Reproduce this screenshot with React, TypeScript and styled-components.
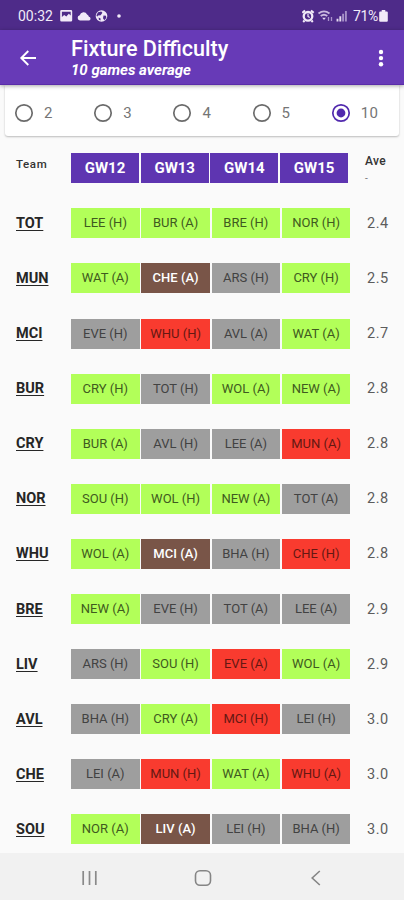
import React from "react";
import styled, { createGlobalStyle } from "styled-components";

const Global = createGlobalStyle`
  * { box-sizing: border-box; }
  html, body { margin: 0; padding: 0; background: #fafafa; }
  body { font-family: Roboto, "Liberation Sans", sans-serif; overflow: hidden; }
`;

const Screen = styled.div`
  width: 404px;
  height: 900px;
  display: flex;
  flex-direction: column;
  background: #fafafa;
  overflow: hidden;
`;

const StatusBar = styled.div`
  height: 30px;
  flex: none;
  display: flex;
  align-items: center;
  justify-content: space-between;
  padding: 2px 16px 0 18px;
  background: #4e2b89;
  color: #f1eaf8;
  font-size: 14px;
`;

const StatusGroup = styled.div`
  display: flex;
  align-items: center;
  svg { display: block; flex: none; }
`;

const Clock = styled.span`
  width: 42px;
`;

const Percent = styled.span`
  margin: 0 1px 0 3px;
  letter-spacing: -0.3px;
`;

const AppBar = styled.header`
  height: 55px;
  flex: none;
  display: flex;
  align-items: flex-start;
  padding: 0 15px 0 16px;
  background: #673ab7;
  border-bottom: 1px solid #5a2ca9;
  box-shadow: 0 1px 4px rgba(0, 0, 0, 0.35);
  color: #fff;
  position: relative;
`;

const IconButton = styled.button<{ $width: number }>`
  width: ${(p) => p.$width}px;
  height: 55px;
  padding: 0;
  border: 0;
  background: none;
  color: inherit;
  display: flex;
  align-items: center;
  svg { display: block; }
`;

const Titles = styled.div`
  flex: 1;
  padding: 6px 0 0 15px;
`;

const Title = styled.h1`
  margin: 0;
  font-size: 21.6px;
  line-height: 25px;
  font-weight: 500;
  white-space: nowrap;
`;

const Subtitle = styled.div`
  font-size: 15px;
  line-height: 19px;
  font-weight: 700;
  font-style: italic;
  white-space: nowrap;
`;

const RangeCard = styled.div`
  height: 51px;
  flex: none;
  margin: 0 5px;
  padding-left: 9px;
  display: flex;
  background: #fff;
  border-radius: 0 0 3px 3px;
  box-shadow: 0 1px 2px rgba(0, 0, 0, 0.25);
`;

const Range = styled.label`
  flex: 0 0 79.2px;
  display: flex;
  align-items: center;
  gap: 10px;
  padding-top: 5px;
  font-size: 15px;
  letter-spacing: 0.2px;
  color: #757575;
  &:last-child { flex-basis: auto; }
  svg { display: block; flex: none; }
`;

const Columns = styled.div`
  display: grid;
  grid-template-columns: 71px 280px 1fr;
  align-items: center;
`;

const HeadRow = styled(Columns)`
  height: 30px;
  flex: none;
  margin-top: 17px;
  align-items: start;
`;

const HeadTeam = styled.div`
  padding: 4px 0 0 16px;
  font-size: 11.5px;
  letter-spacing: 0.6px;
  font-weight: 500;
  color: #333;
`;

const Weeks = styled.div`
  display: grid;
  grid-template-columns: repeat(4, 68px);
  column-gap: 1.7px;
`;

const Week = styled.div`
  height: 30px;
  line-height: 31px;
  text-align: center;
  background: #5e35b1;
  color: #fff;
  font-weight: 700;
  font-size: 15px;
`;

const HeadAverage = styled.div`
  padding-left: 14px;
  font-size: 12px;
  line-height: 17px;
  font-weight: 500;
  letter-spacing: 0.3px;
  color: #333;
`;

const Dash = styled.div`
  font-weight: 400;
  font-size: 10px;
  color: #777;
`;

const Body = styled.main`
  flex: 1;
  min-height: 0;
  overflow: hidden;
  padding-top: 12.8px;
`;

const TeamRow = styled(Columns)`
  height: 55.1px;
`;

const Team = styled.a`
  padding-left: 16px;
  font-size: 14.5px;
  font-weight: 700;
  color: #262626;
  text-decoration: underline;
  text-decoration-thickness: 1px;
  text-underline-offset: 2px;
`;

const Fixtures = styled.div`
  display: grid;
  grid-template-columns: repeat(4, 68.6px);
  column-gap: 1.7px;
`;

type Level = "easy" | "medium" | "hard" | "severe";

const levelColors: Record<Level, { background: string; text: string }> = {
  easy: { background: "#b2ff59", text: "#3f5a20" },
  medium: { background: "#9e9e9e", text: "#424242" },
  hard: { background: "#f93b2f", text: "#651812" },
  severe: { background: "#795548", text: "#ffffff" },
};

const Fixture = styled.div<{ $level: Level }>`
  height: 30px;
  line-height: 30px;
  text-align: center;
  white-space: nowrap;
  font-size: 13px;
  background: ${(p) => levelColors[p.$level].background};
  color: ${(p) => levelColors[p.$level].text};
  font-weight: ${(p) => (p.$level === "severe" ? 500 : 400)};
`;

const Average = styled.div`
  padding-left: 16px;
  font-size: 14.5px;
  letter-spacing: 0.5px;
  color: #5c5c5c;
`;

const NavBar = styled.nav`
  height: 47px;
  flex: none;
  display: grid;
  grid-template-columns: 180px 45px 182px;
  align-items: center;
  justify-items: center;
  padding-top: 2px;
  background: #f1f1f1;
  svg { display: block; }
`;

const code: Record<string, Level> = { e: "easy", m: "medium", h: "hard", s: "severe" };

const teams: { name: string; games: string[]; levels: string; average: string }[] = [
  { name: "TOT", games: ["LEE (H)", "BUR (A)", "BRE (H)", "NOR (H)"], levels: "eeee", average: "2.4" },
  { name: "MUN", games: ["WAT (A)", "CHE (A)", "ARS (H)", "CRY (H)"], levels: "esme", average: "2.5" },
  { name: "MCI", games: ["EVE (H)", "WHU (H)", "AVL (A)", "WAT (A)"], levels: "mhme", average: "2.7" },
  { name: "BUR", games: ["CRY (H)", "TOT (H)", "WOL (A)", "NEW (A)"], levels: "emee", average: "2.8" },
  { name: "CRY", games: ["BUR (A)", "AVL (H)", "LEE (A)", "MUN (A)"], levels: "emmh", average: "2.8" },
  { name: "NOR", games: ["SOU (H)", "WOL (H)", "NEW (A)", "TOT (A)"], levels: "eeem", average: "2.8" },
  { name: "WHU", games: ["WOL (A)", "MCI (A)", "BHA (H)", "CHE (H)"], levels: "esmh", average: "2.8" },
  { name: "BRE", games: ["NEW (A)", "EVE (H)", "TOT (A)", "LEE (A)"], levels: "emmm", average: "2.9" },
  { name: "LIV", games: ["ARS (H)", "SOU (H)", "EVE (A)", "WOL (A)"], levels: "mehe", average: "2.9" },
  { name: "AVL", games: ["BHA (H)", "CRY (A)", "MCI (H)", "LEI (H)"], levels: "mehm", average: "3.0" },
  { name: "CHE", games: ["LEI (A)", "MUN (H)", "WAT (A)", "WHU (A)"], levels: "mheh", average: "3.0" },
  { name: "SOU", games: ["NOR (A)", "LIV (A)", "LEI (H)", "BHA (H)"], levels: "esmm", average: "3.0" },
];

const ranges = [2, 3, 4, 5, 10];
const selectedRange = 10;

const Radio = ({ checked }: { checked: boolean }) => (
  <svg width="20" height="20" viewBox="0 0 20 20" fill="none">
    <circle cx="10" cy="10" r="8.2" stroke={checked ? "#5129ae" : "#6b6b6b"} strokeWidth="1.7" />
    {checked && <circle cx="10" cy="10" r="4.4" fill="#5129ae" />}
  </svg>
);

const NotificationIcons = () => (
  <svg width="64" height="14" viewBox="0 0 64 14" fill="#f1eaf8">
    <path fillRule="evenodd" d="M1.5 1h9.4q1.3 0 1.3 1.3v8.9q0 1.3-1.3 1.3H1.5Q.2 12.5.2 11.2V2.3Q.2 1 1.5 1ZM1.9 2.7v5.2l2.3-2 2.1 1.7 2.5-2.8 1.9 1.7V2.7Z" />
    <path d="M20 11.5a2.700 2.700 0 0 1-.3-5.300 4 4 0 0 1 7.400-.8 3.200 3.200 0 0 1 1.800 2.400 1.900 1.900 0 0 1 .3 3.700Z" />
    <circle cx="41.5" cy="7" r="5.8" />
    <path fill="#4e2b89" d="M38 3.2l3.200-.8 1.200 1.400-1.700 2.500-2.600.2-1 1.300-.7-1.600ZM43.500 6.500l2.500.2.300 2.300-2 2.200-1.300-2ZM38.600 8.600l2 .8-.1 2.200-1.600-.9Z" />
    <circle cx="59" cy="7" r="1.8" />
  </svg>
);

const SignalIcons = () => (
  <svg width="48" height="14" viewBox="0 0 48 14" fill="none">
    <circle cx="6" cy="7.3" r="4.3" stroke="#f1eaf8" strokeWidth="2.3" />
    <path d="M.3 3.800 3 1.400M9 1.400l2.700 2.400M2.500 11.500 1.200 13M9.500 11.500l1.300 1.500" stroke="#f1eaf8" strokeWidth="2" />
    <path d="M6 4.700v2.800l1.700 1" stroke="#f1eaf8" strokeWidth="1.2" />
    <path d="M16.500 4.500q5.500-4.200 11 0M18.700 7q3.300-2.600 6.600 0" stroke="#c9b9df" strokeWidth="1.8" />
    <path d="M20.200 8.800h3.700L22 11Z" fill="#e4daf0" />
    <path d="M26.500 8v4M29.500 8v4" stroke="#a991cb" strokeWidth="1.3" />
    <path d="M35.500 12.500v-2.800M38.300 12.500V7.300" stroke="#e4daf0" strokeWidth="1.9" />
    <path d="M41.100 12.500V4.700M43.900 12.500V2" stroke="#a690c8" strokeWidth="1.9" />
  </svg>
);

const BatteryIcon = () => (
  <svg width="9" height="12" viewBox="0 0 9 12" fill="#f1eaf8">
    <path d="M2.700 0h3.600v1.500h1.500q1 0 1 1v8.200q0 1-1 1H1.200q-1 0-1-1V2.500q0-1 1-1h1.500Z" />
  </svg>
);

export default function App() {
  return (
    <Screen>
      <Global />
      <StatusBar>
        <StatusGroup>
          <Clock>00:32</Clock>
          <NotificationIcons />
        </StatusGroup>
        <StatusGroup>
          <SignalIcons />
          <Percent>71%</Percent>
          <BatteryIcon />
        </StatusGroup>
      </StatusBar>
      <AppBar>
        <IconButton $width={40} aria-label="Back">
          <svg width="24" height="24" viewBox="0 0 24 24" fill="none" stroke="currentColor" strokeWidth="1.9">
            <path d="M20 12H5.500M12.300 5 5.300 12l7 7" />
          </svg>
        </IconButton>
        <Titles>
          <Title>Fixture Difficulty</Title>
          <Subtitle>10 games average</Subtitle>
        </Titles>
        <IconButton $width={16} aria-label="More options">
          <svg width="16" height="20" viewBox="0 0 16 20" fill="currentColor">
            <circle cx="8" cy="4" r="2.2" />
            <circle cx="8" cy="10.1" r="2.2" />
            <circle cx="8" cy="16.2" r="2.2" />
          </svg>
        </IconButton>
      </AppBar>
      <RangeCard>
        {ranges.map((n) => (
          <Range key={n}>
            <Radio checked={n === selectedRange} />
            {n}
          </Range>
        ))}
      </RangeCard>
      <HeadRow>
        <HeadTeam>Team</HeadTeam>
        <Weeks>
          {["GW12", "GW13", "GW14", "GW15"].map((w) => (
            <Week key={w}>{w}</Week>
          ))}
        </Weeks>
        <HeadAverage>
          Ave
          <Dash>-</Dash>
        </HeadAverage>
      </HeadRow>
      <Body>
        {teams.map((t) => (
          <TeamRow key={t.name}>
            <Team>{t.name}</Team>
            <Fixtures>
              {t.games.map((g, i) => (
                <Fixture key={g} $level={code[t.levels[i]]}>
                  {g}
                </Fixture>
              ))}
            </Fixtures>
            <Average>{t.average}</Average>
          </TeamRow>
        ))}
      </Body>
      <NavBar>
        <svg width="18" height="16" viewBox="0 0 18 16" stroke="#8a8a8a" strokeWidth="1.7">
          <path d="M2.200 1v14M8.500 1v14M14.800 1v14" />
        </svg>
        <svg width="18" height="18" viewBox="0 0 18 18" fill="none" stroke="#858585" strokeWidth="1.6">
          <rect x="1.5" y="1.8" width="15" height="14.4" rx="4.5" />
        </svg>
        <svg width="12" height="16" viewBox="0 0 12 16" fill="none" stroke="#858585" strokeWidth="1.6">
          <path d="M9.800 1 2.200 8l7.600 7" />
        </svg>
      </NavBar>
    </Screen>
  );
}
